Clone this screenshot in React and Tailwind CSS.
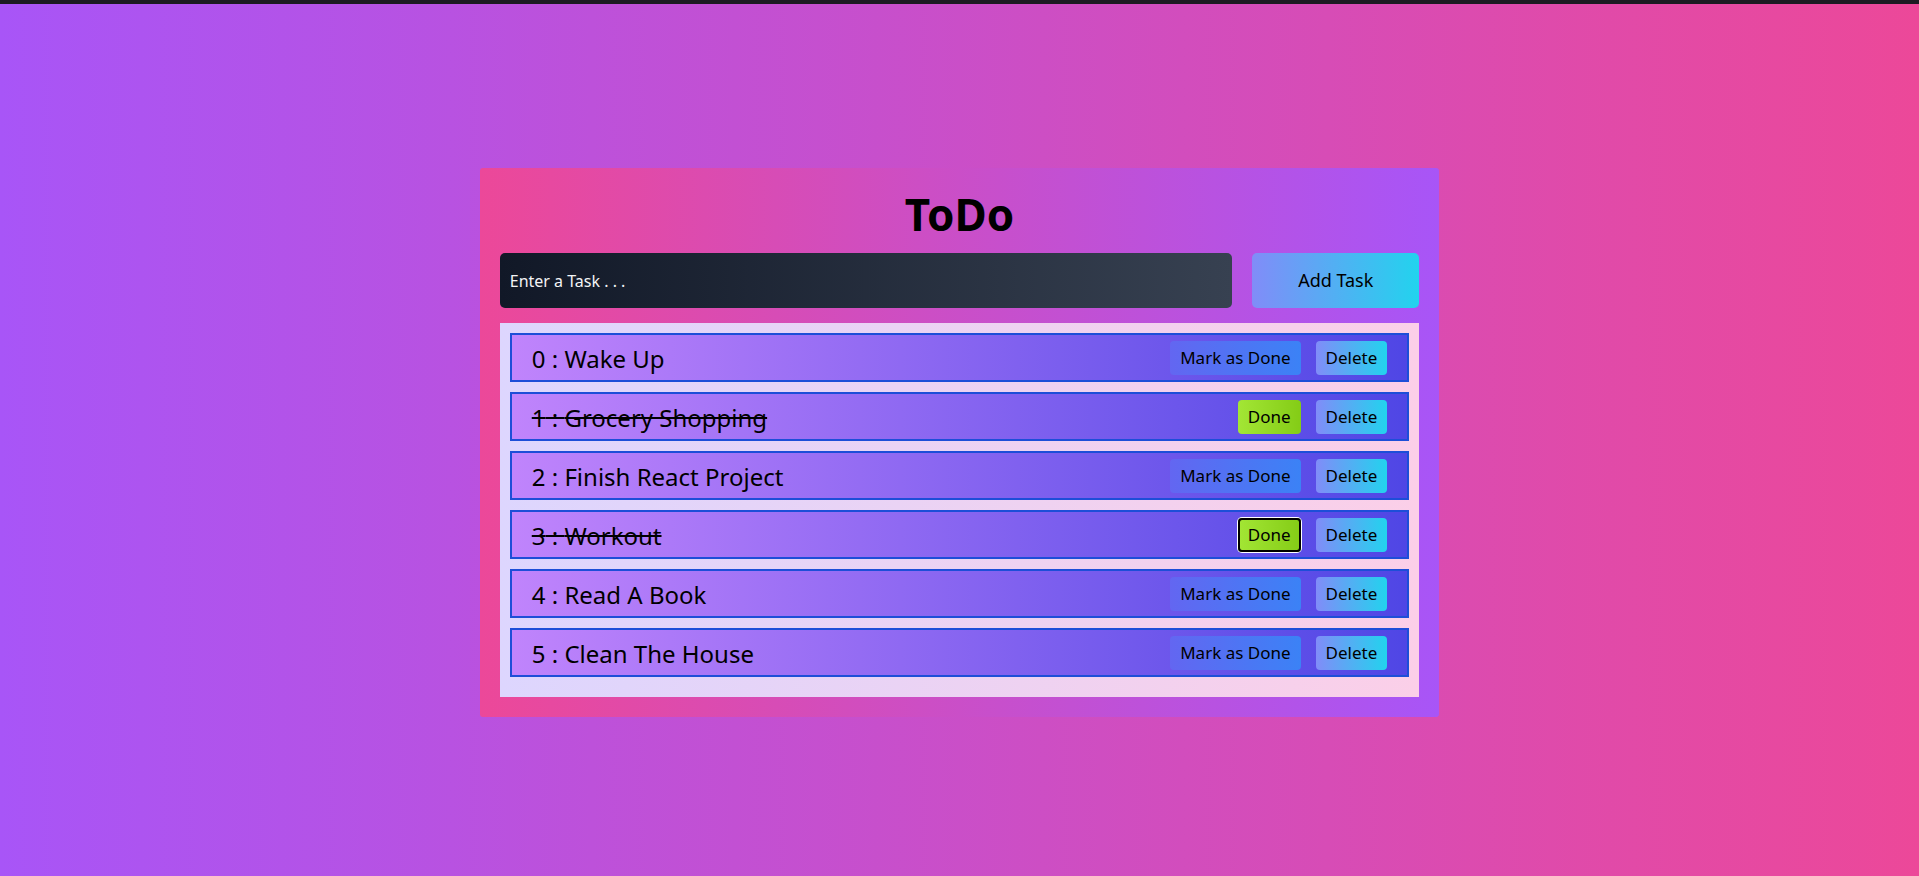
import { useState } from 'react'

const INITIAL_TASKS = [
  { id: 0, text: 'Wake Up', done: false },
  { id: 1, text: 'Grocery Shopping', done: true },
  { id: 2, text: 'Finish React Project', done: false },
  { id: 3, text: 'Workout', done: true },
  { id: 4, text: 'Read A Book', done: false },
  { id: 5, text: 'Clean The House', done: false },
]

const FOCUSED_ID = 3

export default function App() {
  const [tasks, setTasks] = useState(INITIAL_TASKS)
  const [input, setInput] = useState('')

  function addTask() {
    if (!input.trim()) return
    setTasks((prev) => [...prev, { id: prev.length, text: input.trim(), done: false }])
    setInput('')
  }

  function toggleTask(id) {
    setTasks((prev) => prev.map((t) => (t.id === id ? { ...t, done: !t.done } : t)))
  }

  function deleteTask(id) {
    setTasks((prev) => prev.filter((t) => t.id !== id))
  }

  return (
    <div className="min-h-screen font-['Noto_Sans',sans-serif]">
      <div className="h-1 bg-[#1c1b22]" />
      <div className="h-[872px] bg-linear-to-r/srgb from-[#a855f7] to-[#ec4899] pt-[164px]">
        <div className="mx-auto w-1/2 rounded-[3px] bg-linear-to-r/srgb from-[#ec4899] to-[#a855f7] p-5">
          <h1 className="mb-[13px] h-[52px] text-center text-[44px] font-bold leading-[52px] text-black">
            ToDo
          </h1>

          <div className="flex gap-5">
            <input
              type="text"
              value={input}
              onChange={(e) => setInput(e.target.value)}
              placeholder="Enter a Task . . ."
              className="h-[55px] flex-1 rounded-[5px] bg-linear-to-r/srgb from-[#111827] to-[#374151] px-2.5 text-[16px] text-white placeholder:text-gray-100 focus:outline-none"
            />
            <button
              onClick={addTask}
              className="h-[55px] w-[167px] rounded-[5px] bg-linear-to-r/srgb from-[#818cf8] to-[#22d3ee] text-[18px] text-black"
            >
              Add Task
            </button>
          </div>

          <ul className="mt-[15px] bg-linear-to-r/srgb from-[#ddd6fe] to-[#fbcfe8] p-2.5">
            {tasks.map((task) => (
              <li
                key={task.id}
                className="mb-2.5 flex h-[49px] items-center justify-between border-2 border-[#1d4ed8] bg-linear-to-r/srgb from-[#c084fc] to-[#4f46e5] px-5"
              >
                <span className={`pt-0.5 text-[24px] text-black ${task.done ? 'line-through' : ''}`}>
                  {task.id} : {task.text}
                </span>
                <div className="flex items-center gap-[15px]">
                  {task.done ? (
                    <button
                      onClick={() => toggleTask(task.id)}
                      className={`h-[34px] rounded bg-linear-to-r/srgb from-[#a3e635] to-[#84cc16] px-2.5 text-[17px] text-black ${
                        task.id === FOCUSED_ID ? 'shadow-[inset_0_0_0_2px_black,0_0_0_1px_white]' : ''
                      }`}
                    >
                      Done
                    </button>
                  ) : (
                    <button
                      onClick={() => toggleTask(task.id)}
                      className="h-[34px] rounded bg-linear-to-r/srgb from-[#6366f1] to-[#3b82f6] px-2.5 text-[17px] text-black"
                    >
                      Mark as Done
                    </button>
                  )}
                  <button
                    onClick={() => deleteTask(task.id)}
                    className="h-[34px] rounded bg-linear-to-r/srgb from-[#818cf8] to-[#22d3ee] px-2.5 text-[17px] text-black"
                  >
                    Delete
                  </button>
                </div>
              </li>
            ))}
          </ul>
        </div>
      </div>
    </div>
  )
}
